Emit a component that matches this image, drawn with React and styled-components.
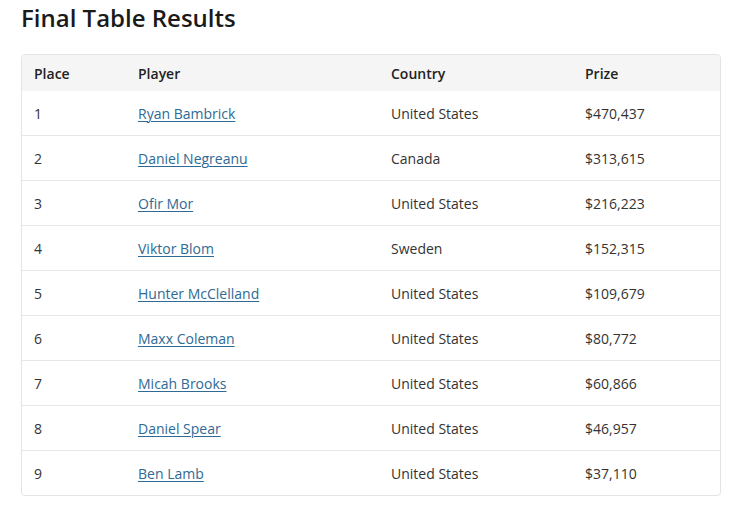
import React from "react";
import styled, { createGlobalStyle } from "styled-components";

const GlobalStyle = createGlobalStyle`
  body {
    margin: 0;
    background: #fff;
    font-family: "Open Sans", "Liberation Sans", sans-serif;
    color: #222;
  }
`;

const Page = styled.div`
  padding: 0 21px 0 21px;
  width: 700px;
`;

const Title = styled.h2`
  margin: 0;
  padding-top: 3px;
  font-size: 24px;
  line-height: 30px;
  font-weight: 600;
  color: #1a1a1a;
`;

const TableWrap = styled.div`
  margin-top: 21px;
  border: 1px solid #e4e4e4;
  border-radius: 4px;
  overflow: hidden;
  box-shadow: 0 1px 1px rgba(0, 0, 0, 0.04);
`;

const Table = styled.table`
  width: 100%;
  border-collapse: collapse;
  font-size: 14px;
  table-layout: fixed;
`;

const HeadCell = styled.th`
  text-align: left;
  font-weight: 600;
  color: #222;
  background: #f5f5f5;
  height: 36px;
  padding: 0 12px;
  box-sizing: border-box;
  width: ${(p) => p.$w || "auto"};
`;

const Row = styled.tr`
  & + & td {
    border-top: 1px solid #e6e6e6;
  }
`;

const Cell = styled.td`
  height: 44px;
  padding: 0 12px;
  color: #333;
`;

const PlayerLink = styled.a`
  color: #2e6a94;
  text-decoration: underline;
  text-underline-offset: 2px;
  text-decoration-thickness: 1px;
`;

const results = [
  { place: 1, player: "Ryan Bambrick", country: "United States", prize: "$470,437" },
  { place: 2, player: "Daniel Negreanu", country: "Canada", prize: "$313,615" },
  { place: 3, player: "Ofir Mor", country: "United States", prize: "$216,223" },
  { place: 4, player: "Viktor Blom", country: "Sweden", prize: "$152,315" },
  { place: 5, player: "Hunter McClelland", country: "United States", prize: "$109,679" },
  { place: 6, player: "Maxx Coleman", country: "United States", prize: "$80,772" },
  { place: 7, player: "Micah Brooks", country: "United States", prize: "$60,866" },
  { place: 8, player: "Daniel Spear", country: "United States", prize: "$46,957" },
  { place: 9, player: "Ben Lamb", country: "United States", prize: "$37,110" },
];

function App() {
  return (
    <Page>
      <GlobalStyle />
      <Title>Final Table Results</Title>
      <TableWrap>
        <Table>
          <colgroup>
            <col style={{ width: 104 }} />
            <col style={{ width: 253 }} />
            <col style={{ width: 194 }} />
            <col />
          </colgroup>
          <thead>
            <tr>
              <HeadCell>Place</HeadCell>
              <HeadCell>Player</HeadCell>
              <HeadCell>Country</HeadCell>
              <HeadCell>Prize</HeadCell>
            </tr>
          </thead>
          <tbody>
            {results.map((r) => (
              <Row key={r.place}>
                <Cell>{r.place}</Cell>
                <Cell>
                  <PlayerLink href="#">{r.player}</PlayerLink>
                </Cell>
                <Cell>{r.country}</Cell>
                <Cell>{r.prize}</Cell>
              </Row>
            ))}
          </tbody>
        </Table>
      </TableWrap>
    </Page>
  );
}

export default App;
